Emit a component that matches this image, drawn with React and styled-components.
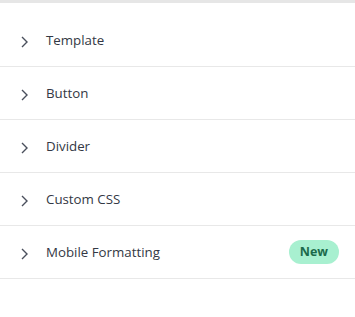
import React from 'react';
import styled, { createGlobalStyle } from 'styled-components';

const GlobalStyle = createGlobalStyle`
  body {
    margin: 0;
    background: #fff;
    font-family: "Open Sans", "Noto Sans", sans-serif;
  }
`;

const sections = [
  { label: 'Template' },
  { label: 'Button' },
  { label: 'Divider' },
  { label: 'Custom CSS' },
  { label: 'Mobile Formatting', badge: 'New' },
];

const App = () => (
  <>
    <GlobalStyle />
    <Panel>
      {sections.map((s) => (
        <Row key={s.label}>
          <Chevron viewBox="0 0 16 16">
            <path d="M6 3 L11 8 L6 13" />
          </Chevron>
          <Label>{s.label}</Label>
          {s.badge && <Badge>{s.badge}</Badge>}
        </Row>
      ))}
    </Panel>
  </>
);

const Panel = styled.div`
  width: 355px;
  border-top: 3px solid #e6e6e6;
  padding-top: 11px;
  display: flex;
  flex-direction: column;
`;

const Row = styled.div`
  height: 52px;
  display: flex;
  align-items: center;
  padding: 0 16px;
  border-bottom: 1px solid #e8e8e8;
`;

const Chevron = styled.svg`
  width: 16px;
  height: 16px;
  flex: 0 0 16px;
  margin: 4px 14px 0 0;
  fill: none;
  stroke: #4a4f5c;
  stroke-width: 1.4;
`;

const Label = styled.span`
  flex: 1;
  font-size: 13.3px;
  color: #333844;
`;

const Badge = styled.span`
  background: #a8f0d0;
  color: #1b6a4b;
  font-weight: 700;
  font-size: 12.5px;
  border-radius: 12px;
  padding: 3px 11px;
  line-height: 18px;
`;

export default App;
